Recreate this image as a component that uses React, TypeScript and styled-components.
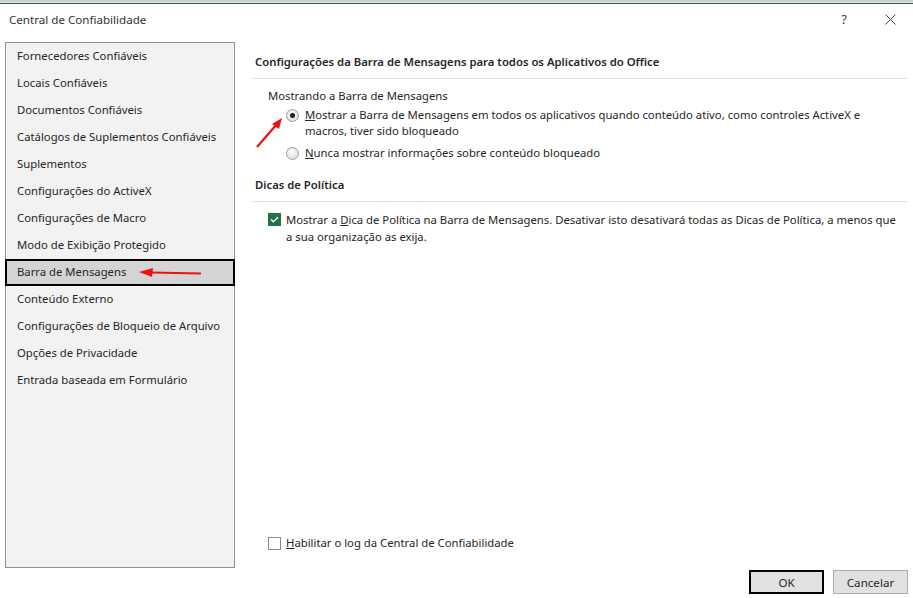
import React, { useState } from 'react';
import styled, { createGlobalStyle } from 'styled-components';

const GlobalStyle = createGlobalStyle`
  html, body {
    margin: 0;
    padding: 0;
    background: #fff;
  }
  body {
    font-family: 'Noto Sans', 'Liberation Sans', sans-serif;
    font-size: 11.3px;
    color: #262626;
  }
`;

const Dialog = styled.div`
  width: 913px;
  height: 598px;
  display: flex;
  flex-direction: column;
  overflow: hidden;
`;

const TopStrip = styled.div`
  height: 3px;
  background: linear-gradient(#c8c8c8, #e4e4e4);
  border-bottom: 1px solid #1e7145;
`;

const TitleBar = styled.div`
  height: 30px;
  display: flex;
  align-items: center;
  padding-left: 9px;
  color: #333;
`;

const Title = styled.div`
  flex: 1;
  font-size: 11.6px;
`;

const TitleButton = styled.div`
  width: 46px;
  height: 30px;
  display: flex;
  align-items: center;
  justify-content: center;
  color: #444;
  font-size: 13px;
`;

const Main = styled.div`
  height: 526px;
  margin-top: 8px;
  display: flex;
`;

const NavPanel = styled.div`
  width: 228px;
  margin-left: 5px;
  border: 1px solid #8f8f8f;
  background: #f2f2f2;
  display: flex;
  flex-direction: column;
`;

const NavItem = styled.div<{ $selected?: boolean }>`
  position: relative;
  height: 27px;
  display: flex;
  align-items: center;
  padding-bottom: 2px;
  margin: ${(p) => (p.$selected ? '0 -1px' : '0')};
  padding-left: ${(p) => (p.$selected ? '10px' : '11px')};
  box-sizing: border-box;
  background: ${(p) => (p.$selected ? '#d4d4d4' : 'transparent')};
  border: ${(p) => (p.$selected ? '2px solid #000' : 'none')};
  color: #262626;
  white-space: nowrap;
`;

const NavArrow = styled.svg`
  position: absolute;
  left: 130px;
  top: 5px;
`;

const Content = styled.div`
  position: relative;
  flex: 1;
  margin-left: 16px;
  margin-right: 5px;
  display: flex;
  flex-direction: column;
`;

const SectionHeading = styled.div<{ $first?: boolean }>`
  margin-top: ${(p) => (p.$first ? '12px' : '16px')};
  padding: 0 4px 8px;
  line-height: 16px;
  font-weight: 600;
  color: #262626;
  border-bottom: 1px solid #e2e2e2;
`;

const GroupLabel = styled.div`
  margin: 9px 0 0 17px;
  line-height: 16px;
`;

const OptionRow = styled.label<{ $indent: number; $gap: number }>`
  display: flex;
  align-items: flex-start;
  margin-left: ${(p) => p.$indent}px;
  margin-top: ${(p) => p.$gap}px;
  line-height: 16px;
  cursor: default;
`;

const OptionText = styled.span<{ $lh?: number; $pr?: number }>`
  line-height: ${(p) => p.$lh ?? 16}px;
  padding-right: ${(p) => p.$pr ?? 16}px;
`;

const Radio = styled.span<{ $on?: boolean }>`
  flex: none;
  position: relative;
  width: 11px;
  height: 11px;
  margin: 2px 6px 0 0;
  border-radius: 50%;
  border: 1px solid #9c9c9c;
  background: radial-gradient(circle at 40% 35%, #fbfbfb, #d6d6d6);
  &::after {
    content: '';
    display: ${(p) => (p.$on ? 'block' : 'none')};
    position: absolute;
    left: 3px;
    top: 3px;
    width: 5px;
    height: 5px;
    border-radius: 50%;
    background: #1b1b1b;
  }
`;

const Check = styled.span<{ $on?: boolean }>`
  flex: none;
  width: 13px;
  height: 13px;
  margin: 2px 5px 0 0;
  box-sizing: border-box;
  border: 1px solid ${(p) => (p.$on ? '#217346' : '#8a8a8a')};
  background: ${(p) => (p.$on ? '#217346' : '#fff')};
  display: flex;
  align-items: center;
  justify-content: center;
`;

const BottomRow = styled(OptionRow)`
  margin-top: auto;
  margin-bottom: 17px;
`;

const RadioArrow = styled.svg`
  position: absolute;
  left: 4px;
  top: 74px;
`;

const Footer = styled.div`
  display: flex;
  justify-content: flex-end;
  gap: 9px;
  padding: 2px 5px 0 0;
`;

const Button = styled.button<{ $default?: boolean }>`
  width: 75px;
  height: 24px;
  box-sizing: border-box;
  font-family: inherit;
  font-size: 11.6px;
  color: #262626;
  background: #e1e1e1;
  border: ${(p) => (p.$default ? '2px solid #000' : '1px solid #adadad')};
  padding: 0;
`;

const navItems = [
  'Fornecedores Confiáveis',
  'Locais Confiáveis',
  'Documentos Confiáveis',
  'Catálogos de Suplementos Confiáveis',
  'Suplementos',
  'Configurações do ActiveX',
  'Configurações de Macro',
  'Modo de Exibição Protegido',
  'Barra de Mensagens',
  'Conteúdo Externo',
  'Configurações de Bloqueio de Arquivo',
  'Opções de Privacidade',
  'Entrada baseada em Formulário',
];

const CheckMark = () => (
  <svg width="9" height="7" viewBox="0 0 9 7">
    <path d="M1 3.5 L3.4 5.8 L8 1.2" fill="none" stroke="#fff" strokeWidth="1.5" />
  </svg>
);

export default function App() {
  const [selected] = useState('Barra de Mensagens');
  const [showBar, setShowBar] = useState(true);
  const [policyTips, setPolicyTips] = useState(true);
  const [logging, setLogging] = useState(false);

  return (
    <Dialog>
      <GlobalStyle />
      <TopStrip />
      <TitleBar>
        <Title>Central de Confiabilidade</Title>
        <TitleButton>?</TitleButton>
        <TitleButton>
          <svg width="11" height="11" viewBox="0 0 11 11">
            <path d="M0.5 0.5 L10.5 10.5 M10.5 0.5 L0.5 10.5" stroke="#444" strokeWidth="1" />
          </svg>
        </TitleButton>
      </TitleBar>

      <Main>
        <NavPanel>
          {navItems.map((item) => (
            <NavItem key={item} $selected={item === selected}>
              {item}
              {item === selected && (
                <NavArrow width="66" height="12" viewBox="0 0 66 12">
                  <path d="M14 6.5 L64 7.5" stroke="#ee1111" strokeWidth="2.2" />
                  <path d="M2 6 L16 2 L15 11 Z" fill="#ee1111" />
                </NavArrow>
              )}
            </NavItem>
          ))}
        </NavPanel>

        <Content>
          <SectionHeading $first>
            Configurações da Barra de Mensagens para todos os Aplicativos do Office
          </SectionHeading>
          <GroupLabel>Mostrando a Barra de Mensagens</GroupLabel>
          <OptionRow $indent={35} $gap={3} onClick={() => setShowBar(true)}>
            <Radio $on={showBar} />
            <OptionText>
              <u>M</u>ostrar a Barra de Mensagens em todos os aplicativos quando conteúdo ativo, como controles ActiveX e macros, tiver sido bloqueado
            </OptionText>
          </OptionRow>
          <OptionRow $indent={35} $gap={6} onClick={() => setShowBar(false)}>
            <Radio $on={!showBar} />
            <OptionText>
              <u>N</u>unca mostrar informações sobre conteúdo bloqueado
            </OptionText>
          </OptionRow>

          <SectionHeading>Dicas de Política</SectionHeading>
          <OptionRow $indent={17} $gap={9} onClick={() => setPolicyTips(!policyTips)}>
            <Check $on={policyTips}>{policyTips && <CheckMark />}</Check>
            <OptionText $lh={17} $pr={10}>
              Mostrar a <u>D</u>ica de Política na Barra de Mensagens. Desativar isto desativará todas as Dicas de Política, a menos que a sua organização as exija.
            </OptionText>
          </OptionRow>

          <BottomRow $indent={17} $gap={0} onClick={() => setLogging(!logging)}>
            <Check $on={logging}>{logging && <CheckMark />}</Check>
            <OptionText>
              <u>H</u>abilitar o log da Central de Confiabilidade
            </OptionText>
          </BottomRow>

          <RadioArrow width="30" height="32" viewBox="0 0 30 32">
            <path d="M2 31 L22 8" stroke="#ee1111" strokeWidth="2.2" />
            <path d="M27 2 L17 8 L24 13 Z" fill="#ee1111" />
          </RadioArrow>
        </Content>
      </Main>

      <Footer>
        <Button $default>OK</Button>
        <Button>Cancelar</Button>
      </Footer>
    </Dialog>
  );
}
